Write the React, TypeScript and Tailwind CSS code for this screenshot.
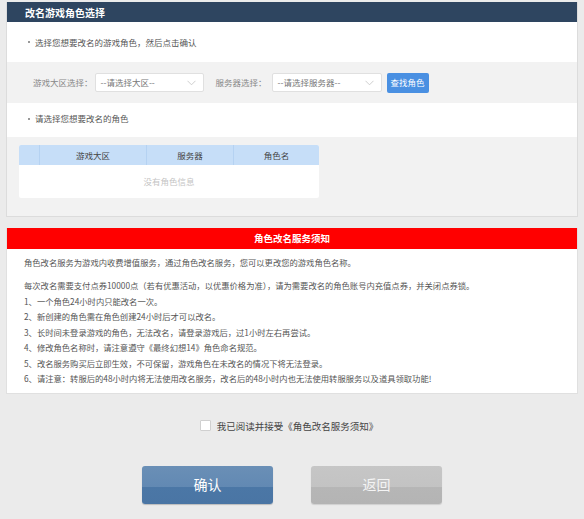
import React from "react";

const font = { fontFamily: '"Noto Sans CJK SC", "Noto Sans", sans-serif' };

function Chevron() {
  return (
    <svg width="9" height="6" viewBox="0 0 9 6" className="shrink-0">
      <path d="M0.5 0.8 L4.5 4.8 L8.5 0.8" fill="none" stroke="#c8c8c8" strokeWidth="0.9" />
    </svg>
  );
}

function Select({ label, w }: { label: string; w: string }) {
  return (
    <div className={`${w} h-[19px] bg-white border border-[#e0e0e0] rounded-[2px] flex items-center justify-between pl-[5px] pr-[7px] text-[8.5px] text-[#777]`}>
      <span>{label}</span>
      <Chevron />
    </div>
  );
}

function Dot() {
  return <span className="inline-block w-[2px] h-[2px] rounded-full bg-[#777] mr-[5px]" />;
}

export default function App() {
  const rules = [
    "1、一个角色24小时内只能改名一次。",
    "2、新创建的角色需在角色创建24小时后才可以改名。",
    "3、长时间未登录游戏的角色，无法改名，请登录游戏后，过1小时左右再尝试。",
    "4、修改角色名称时，请注意遵守《最终幻想14》角色命名规范。",
    "5、改名服务购买后立即生效，不可保留，游戏角色在未改名的情况下将无法登录。",
    "6、请注意：转服后的48小时内将无法使用改名服务，改名后的48小时内也无法使用转服服务以及道具领取功能!",
  ];
  return (
    <div style={font} className="w-[584px] h-[519px] overflow-hidden bg-[#ebebeb] pt-[2px] px-[6px] text-[#555]">
      {/* Panel 1 */}
      <div className="h-[215px] bg-[#f2f2f2] border border-[#dcdcdc] border-t-0 flex flex-col">
        <div className="h-[20px] bg-[#2e4560] text-white text-[10px] font-bold pl-[18px] flex items-center shrink-0">
          改名游戏角色选择
        </div>
        <div className="h-[40px] bg-white flex items-center pl-[21px] text-[8.5px] text-[#555] shrink-0">
          <Dot />选择您想要改名的游戏角色，然后点击确认
        </div>
        <div className="h-[41px] flex items-center pl-[26px] text-[8.5px] text-[#888] shrink-0">
          <span className="mr-[2px]">游戏大区选择：</span>
          <Select label="--请选择大区--" w="w-[109px]" />
          <span className="ml-[12px] mr-[5px]">服务器选择：</span>
          <Select label="--请选择服务器--" w="w-[110px]" />
          <div className="ml-[5px] w-[42px] h-[20px] bg-[#4a90e2] rounded-[2px] text-white text-[8.5px] flex items-center justify-center">
            查找角色
          </div>
        </div>
        <div className="h-[34px] bg-white flex items-center pl-[21px] pb-[3px] text-[8.5px] text-[#555] shrink-0">
          <Dot />请选择您想要改名的角色
        </div>
        <div className="pt-[8px] pl-[12px]">
          <div className="w-[300px] bg-white rounded-[2px] overflow-hidden">
            <div className="h-[20px] bg-[#c6def8] grid grid-cols-[21px_107px_87px_85px] text-[8.5px] text-[#444]">
              <div className="border-r border-[#b5d2f2]" />
              <div className="flex items-center justify-center border-r border-[#b5d2f2]">游戏大区</div>
              <div className="flex items-center justify-center border-r border-[#b5d2f2]">服务器</div>
              <div className="flex items-center justify-center">角色名</div>
            </div>
            <div className="h-[33px] flex items-center justify-center text-[8.5px] text-[#c4c4c4]">
              没有角色信息
            </div>
          </div>
        </div>
      </div>

      {/* Panel 2 */}
      <div className="mt-[11px] bg-white border border-[#e0e0e0] border-t-0">
        <div className="h-[21px] bg-[#ff0000] text-white text-[9.5px] font-bold flex items-center justify-center">
          角色改名服务须知
        </div>
        <div className="pl-[17px] pt-[6px] pb-[6px] text-[8.3px] leading-[15.5px] text-[#555]">
          <p className="mb-[7.5px]">角色改名服务为游戏内收费增值服务，通过角色改名服务，您可以更改您的游戏角色名称。</p>
          <p>每次改名需要支付点券10000点（若有优惠活动，以优惠价格为准），请为需要改名的角色账号内充值点券，并关闭点券锁。</p>
          {rules.map((r) => (
            <p key={r}>{r}</p>
          ))}
        </div>
      </div>

      {/* Agreement */}
      <div className="mt-[25px] flex items-center justify-center pr-[6px] text-[9.5px] text-[#444]">
        <div className="w-[11px] h-[11px] bg-white border border-[#d0d0d0] rounded-[1px] mr-[6px]" />
        我已阅读并接受《角色改名服务须知》
      </div>

      {/* Buttons */}
      <div className="mt-[33px] flex pl-[136px] gap-[38px]">
        <div className="w-[131px] h-[38px] rounded-[3px] overflow-hidden bg-[linear-gradient(to_bottom,#6a8fb6_0%,#6289b3_55%,#4b77a6_55%,#4a75a4_100%)] shadow-[0_1px_1px_rgba(0,0,0,0.2)] flex items-center justify-center text-white text-[14px]">
          确认
        </div>
        <div className="w-[131px] h-[38px] rounded-[3px] overflow-hidden bg-[linear-gradient(to_bottom,#c6c6c6_0%,#c3c3c3_55%,#b6b6b6_55%,#b4b4b4_100%)] shadow-[0_1px_1px_rgba(0,0,0,0.12)] flex items-center justify-center text-[#f4f4f4] text-[14px]">
          返回
        </div>
      </div>
    </div>
  );
}
